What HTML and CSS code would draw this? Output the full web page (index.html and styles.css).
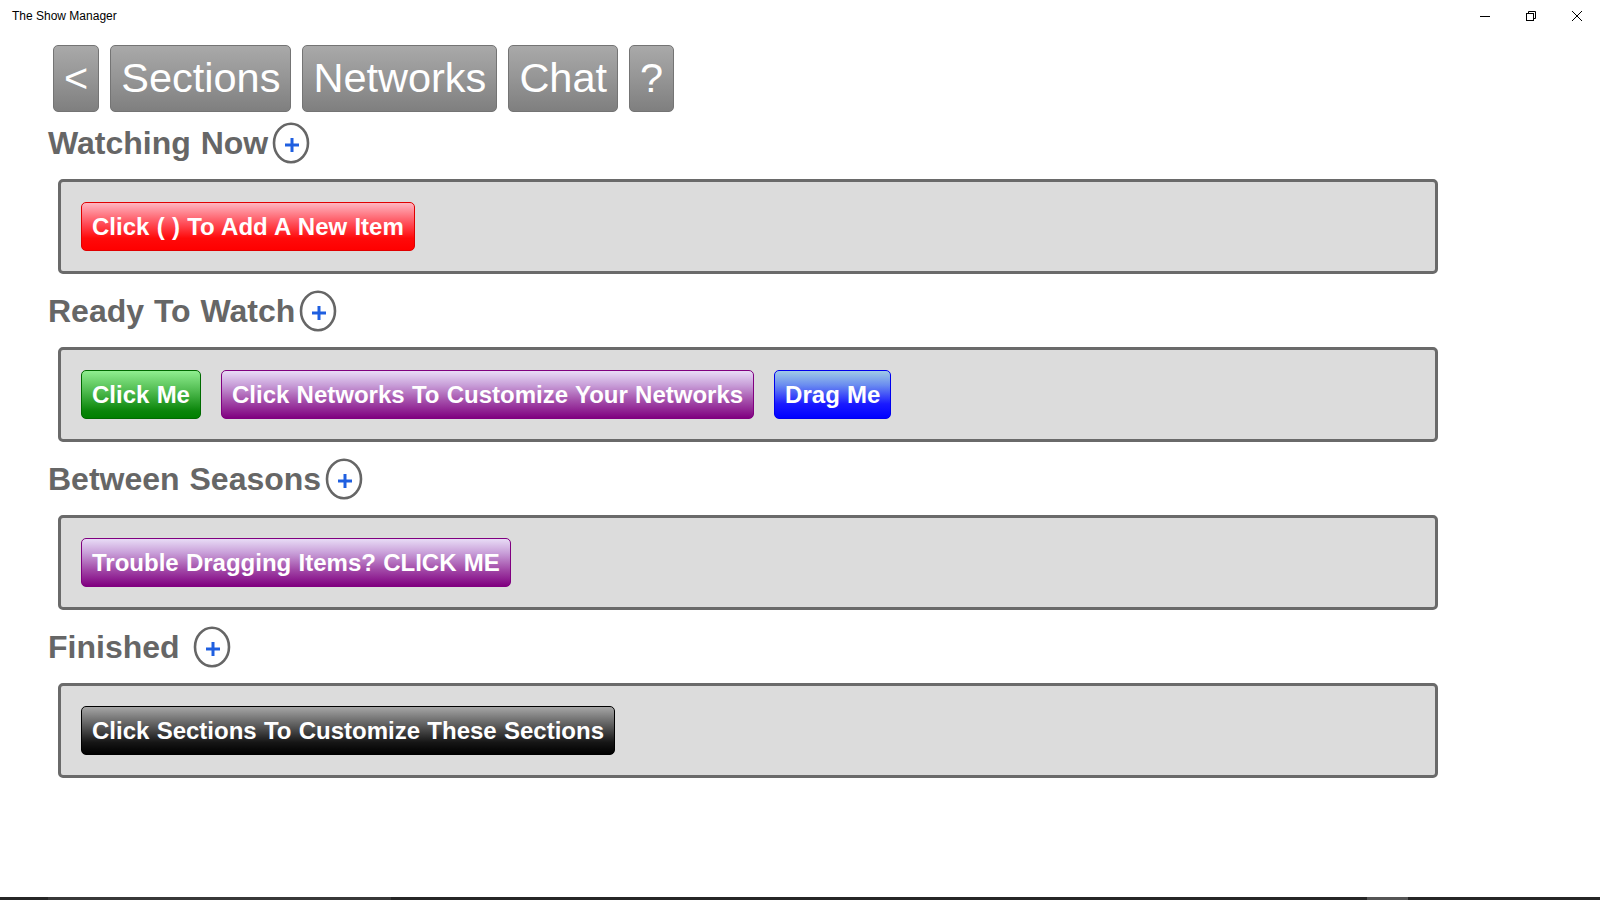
FILE: index.html
```html
<!DOCTYPE html>
<html lang="en">
<head>
<meta charset="utf-8">
<title>The Show Manager</title>
<link rel="stylesheet" href="styles.css">
</head>
<body>
<div class="app">
  <header class="titlebar">
    <div class="app-title">The Show Manager</div>
    <div class="caption">
      <div class="cap-btn">
        <svg width="10" height="10" viewBox="0 0 10 10"><line x1="0" y1="5.5" x2="10" y2="5.5" stroke="#000" stroke-width="1"/></svg>
      </div>
      <div class="cap-btn">
        <svg width="10" height="10" viewBox="0 0 10 10" fill="none" stroke="#000" stroke-width="1"><rect x="0.5" y="2.5" width="7" height="7"/><polyline points="2.5,2.5 2.5,0.5 9.5,0.5 9.5,7.5 7.5,7.5"/></svg>
      </div>
      <div class="cap-btn">
        <svg width="10" height="10" viewBox="0 0 10 10" stroke="#000" stroke-width="1"><line x1="0" y1="0" x2="10" y2="10"/><line x1="10" y1="0" x2="0" y2="10"/></svg>
      </div>
    </div>
  </header>

  <main class="main">
    <nav class="nav">
      <div class="nav-btn">&lt;</div>
      <div class="nav-btn">Sections</div>
      <div class="nav-btn">Networks</div>
      <div class="nav-btn">Chat</div>
      <div class="nav-btn">?</div>
    </nav>

    <section class="section first">
      <div class="section-head">
        <span class="section-title">Watching Now</span>
        <svg class="add" width="38" height="42" viewBox="0 0 38 42"><ellipse cx="19" cy="21" rx="17" ry="19.2" fill="none" stroke="#666" stroke-width="2.6"/><line x1="13" y1="23" x2="27" y2="23" stroke="#1f5fe0" stroke-width="3"/><line x1="20" y1="16" x2="20" y2="30" stroke="#1f5fe0" stroke-width="3"/></svg>
      </div>
      <div class="box">
        <div class="item red">Click ( ) To Add A New Item</div>
      </div>
    </section>

    <section class="section">
      <div class="section-head">
        <span class="section-title">Ready To Watch</span>
        <svg class="add" width="38" height="42" viewBox="0 0 38 42"><ellipse cx="19" cy="21" rx="17" ry="19.2" fill="none" stroke="#666" stroke-width="2.6"/><line x1="13" y1="23" x2="27" y2="23" stroke="#1f5fe0" stroke-width="3"/><line x1="20" y1="16" x2="20" y2="30" stroke="#1f5fe0" stroke-width="3"/></svg>
      </div>
      <div class="box">
        <div class="item green">Click Me</div>
        <div class="item purple">Click Networks To Customize Your Networks</div>
        <div class="item blue">Drag Me</div>
      </div>
    </section>

    <section class="section">
      <div class="section-head">
        <span class="section-title">Between Seasons</span>
        <svg class="add" width="38" height="42" viewBox="0 0 38 42"><ellipse cx="19" cy="21" rx="17" ry="19.2" fill="none" stroke="#666" stroke-width="2.6"/><line x1="13" y1="23" x2="27" y2="23" stroke="#1f5fe0" stroke-width="3"/><line x1="20" y1="16" x2="20" y2="30" stroke="#1f5fe0" stroke-width="3"/></svg>
      </div>
      <div class="box">
        <div class="item purple">Trouble Dragging Items? CLICK ME</div>
      </div>
    </section>

    <section class="section">
      <div class="section-head">
        <span class="section-title">Finished&nbsp;</span>
        <svg class="add" width="38" height="42" viewBox="0 0 38 42"><ellipse cx="19" cy="21" rx="17" ry="19.2" fill="none" stroke="#666" stroke-width="2.6"/><line x1="13" y1="23" x2="27" y2="23" stroke="#1f5fe0" stroke-width="3"/><line x1="20" y1="16" x2="20" y2="30" stroke="#1f5fe0" stroke-width="3"/></svg>
      </div>
      <div class="box">
        <div class="item black">Click Sections To Customize These Sections</div>
      </div>
    </section>
  </main>

  <div class="bottombar"></div>
</div>
</body>
</html>
```
FILE: styles.css
```css
* { box-sizing: border-box; }

html, body {
  margin: 0;
  padding: 0;
  background: #ffffff;
}

body {
  font-family: "Liberation Sans", Arial, sans-serif;
  color: #000;
}

.app {
  height: 100vh;
  display: flex;
  flex-direction: column;
  overflow: hidden;
}

/* Window chrome */
.titlebar {
  height: 32px;
  display: flex;
  align-items: center;
  justify-content: space-between;
  flex-shrink: 0;
}

.app-title {
  font-size: 12px;
  padding-left: 12px;
  color: #000;
  line-height: 14px;
  margin-top: -1px;
}

.caption {
  display: flex;
  height: 32px;
}

.cap-btn {
  width: 46px;
  height: 32px;
  display: flex;
  align-items: center;
  justify-content: center;
}

.cap-btn svg { display: block; }

/* Main content */
.main {
  padding: 13px 0 0 48px;
}

.nav {
  display: flex;
  gap: 11px;
  margin-left: 5px;
}

.nav-btn {
  height: 67px;
  padding: 0 10px 1px 10px;
  display: flex;
  align-items: center;
  justify-content: center;
  font-size: 41.5px;
  color: #ffffff;
  background: linear-gradient(to bottom, #a9a9a9 0%, #959595 50%, #7f7f7f 100%);
  border: 1px solid #747474;
  border-radius: 5px;
  line-height: 1;
}

.section {
  display: flex;
  flex-direction: column;
}

.section-head {
  height: 41px;
  margin: 16px 0 16px 0;
  display: flex;
  align-items: center;
}

.section.first .section-head {
  margin-top: 10px;
}

.section-title {
  font-size: 32px;
  font-weight: bold;
  color: #666666;
  line-height: 37px;
  margin-top: 2px;
  white-space: pre;
  word-spacing: 1px;
}

.add {
  display: block;
  margin-left: 4px;
  flex-shrink: 0;
}

.box {
  width: 1380px;
  height: 95px;
  margin-left: 10px;
  padding: 20px;
  border: 3px solid #6a6a6a;
  border-radius: 5px;
  background: #dcdcdc;
  display: flex;
  align-items: flex-start;
  gap: 20px;
}

.item {
  height: 49px;
  padding: 0 10px;
  display: flex;
  align-items: center;
  font-size: 24px;
  font-weight: bold;
  color: #ffffff;
  border: 1px solid;
  border-radius: 5px;
  white-space: nowrap;
  line-height: 1;
  word-spacing: 0.6px;
}

.red {
  background: linear-gradient(to bottom, #ffb6c1 0%, #ff4a55 45%, #ff0a0a 75%, #ff0000 100%);
  border-color: #e00000;
}

.green {
  background: linear-gradient(to bottom, #90ee90 0%, #4cb84c 45%, #0a850a 85%, #008000 100%);
  border-color: #006a00;
}

.purple {
  background: linear-gradient(to bottom, #e8dcf6 0%, #c89ed8 30%, #a24aa8 65%, #800080 100%);
  border-color: #800080;
}

.blue {
  background: linear-gradient(to bottom, #a0cbe6 0%, #6a8cf0 30%, #1a1aff 70%, #0000ff 100%);
  border-color: #0000ee;
}

.black {
  background: linear-gradient(to bottom, #a6a6a6 0%, #5a5a5a 40%, #161616 75%, #000000 100%);
  border-color: #000000;
}

.bottombar {
  margin-top: auto;
  height: 3px;
  flex-shrink: 0;
  background: linear-gradient(to right,
    #262626 0px, #262626 48px,
    #383838 48px, #383838 391px,
    #262626 391px, #262626 1367px,
    #555555 1367px, #555555 1408px,
    #262626 1408px, #262626 100%);
}
```
